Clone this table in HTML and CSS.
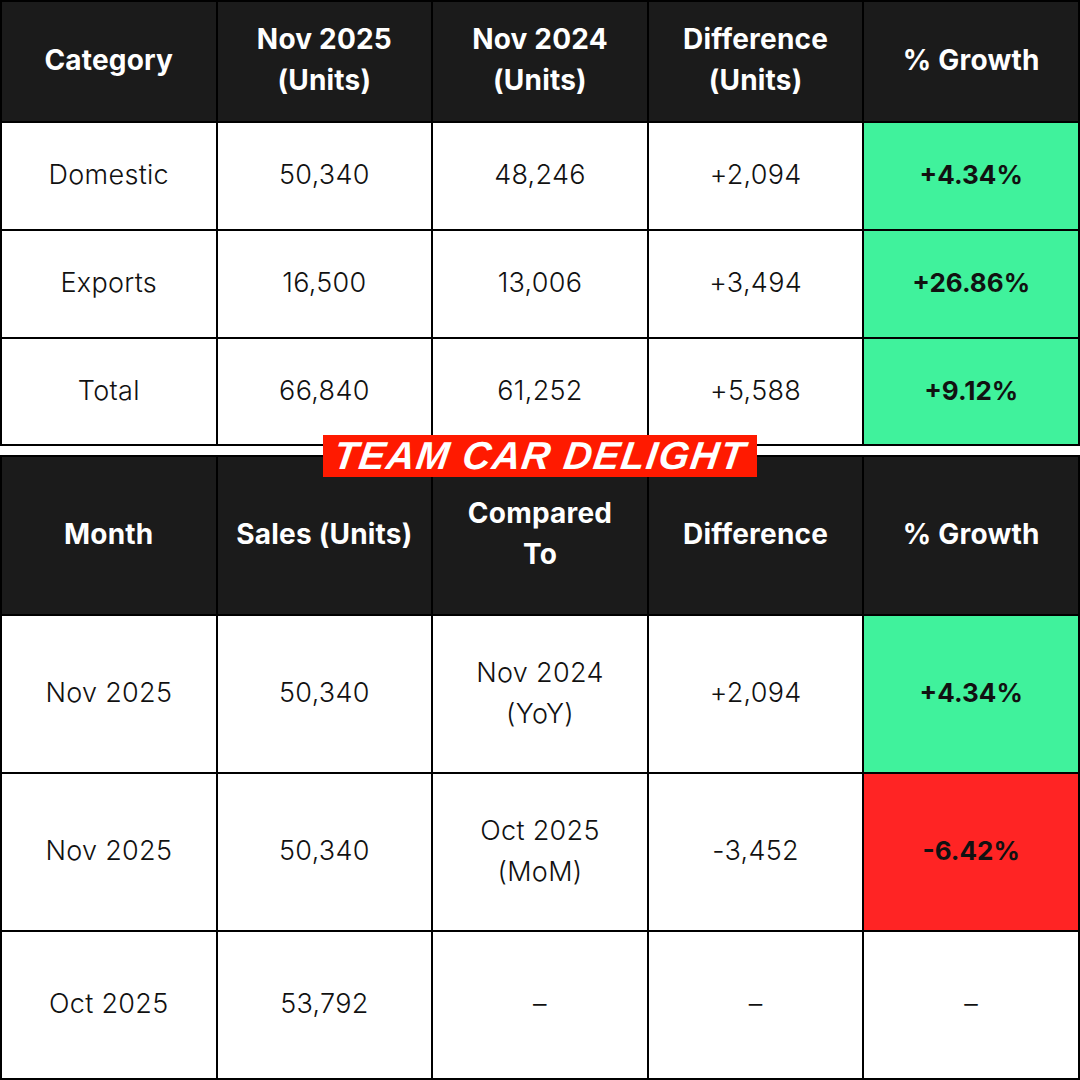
FILE: index.html
```html
<!DOCTYPE html>
<html>
<head>
<meta charset="utf-8">
<link rel="stylesheet" href="styles.css">
</head>
<body>
<div class="page">
  <div class="table t1">
    <div class="cell head">Category</div>
    <div class="cell head">Nov 2025<br>(Units)</div>
    <div class="cell head">Nov 2024<br>(Units)</div>
    <div class="cell head">Difference<br>(Units)</div>
    <div class="cell head">% Growth</div>

    <div class="cell">Domestic</div>
    <div class="cell">50,340</div>
    <div class="cell">48,246</div>
    <div class="cell">+2,094</div>
    <div class="cell up">+4.34%</div>

    <div class="cell">Exports</div>
    <div class="cell">16,500</div>
    <div class="cell">13,006</div>
    <div class="cell">+3,494</div>
    <div class="cell up">+26.86%</div>

    <div class="cell">Total</div>
    <div class="cell">66,840</div>
    <div class="cell">61,252</div>
    <div class="cell">+5,588</div>
    <div class="cell up">+9.12%</div>
  </div>

  <div class="table t2">
    <div class="cell head">Month</div>
    <div class="cell head">Sales (Units)</div>
    <div class="cell head">Compared<br>To</div>
    <div class="cell head">Difference</div>
    <div class="cell head">% Growth</div>

    <div class="cell">Nov 2025</div>
    <div class="cell">50,340</div>
    <div class="cell">Nov 2024<br>(YoY)</div>
    <div class="cell">+2,094</div>
    <div class="cell up">+4.34%</div>

    <div class="cell">Nov 2025</div>
    <div class="cell">50,340</div>
    <div class="cell">Oct 2025<br>(MoM)</div>
    <div class="cell">-3,452</div>
    <div class="cell down">-6.42%</div>

    <div class="cell">Oct 2025</div>
    <div class="cell">53,792</div>
    <div class="cell">–</div>
    <div class="cell">–</div>
    <div class="cell">–</div>
  </div>

  <div class="logo"><span>TEAM CAR DELIGHT</span></div>
</div>
</body>
</html>
```
FILE: styles.css
```css
html, body {
  margin: 0;
  padding: 0;
  background: #ffffff;
}

.page {
  position: relative;
  width: 1080px;
  height: 1080px;
  display: flex;
  flex-direction: column;
  gap: 9px;
  font-family: "Inter", "Liberation Sans", sans-serif;
  color: #111111;
}

.table {
  display: grid;
  grid-template-columns: repeat(5, 1fr);
  gap: 2px;
  padding: 2px;
  background: #000000;
}

.t1 {
  grid-template-rows: 119px 106px 106px 105px;
}

.t2 {
  grid-template-rows: 157px 156px 156px 146px;
}

.cell {
  background: #ffffff;
  display: flex;
  align-items: center;
  justify-content: center;
  text-align: center;
  font-size: 27px;
  line-height: 41px;
  font-weight: 300;
  letter-spacing: 0.3px;
  padding-bottom: 3px;
}

.cell.head {
  background: #1b1b1b;
  color: #ffffff;
  font-weight: 700;
  font-size: 28px;
  letter-spacing: 0.2px;
}

.cell.up {
  background: #40f29c;
  font-weight: 700;
  font-size: 26px;
  letter-spacing: 0;
}

.cell.down {
  background: #ff2424;
  font-weight: 700;
  font-size: 26px;
  letter-spacing: 0;
}

.logo {
  position: absolute;
  left: 323px;
  top: 435px;
  width: 434px;
  height: 42px;
  background: #ff1a00;
  display: flex;
  align-items: center;
  justify-content: center;
  overflow: hidden;
}

.logo span {
  font-family: "Liberation Sans", sans-serif;
  font-weight: 700;
  font-style: italic;
  font-size: 39px;
  line-height: 42px;
  color: #ffffff;
  letter-spacing: 1.5px;
  transform: skewX(-8deg);
}
```
